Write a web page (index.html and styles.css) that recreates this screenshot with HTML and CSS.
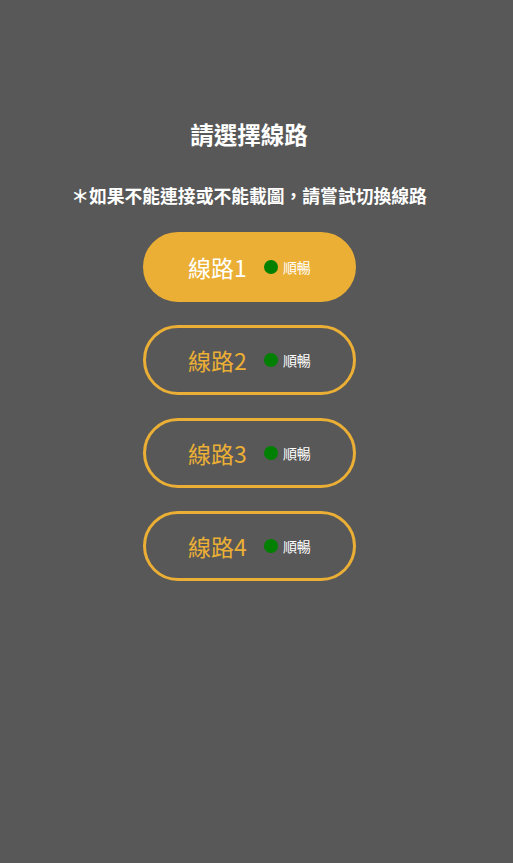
FILE: index.html
```html
<!DOCTYPE html>
<html lang="zh-Hant">
<head>
<meta charset="utf-8">
<link rel="stylesheet" href="styles.css">
</head>
<body>
<main class="page">
  <h1 class="title">請選擇線路</h1>
  <p class="hint">＊如果不能連接或不能載圖，請嘗試切換線路</p>
  <ul class="lines">
    <li class="line active"><span class="name">線路1</span><span class="dot"></span><span class="status">順暢</span></li>
    <li class="line"><span class="name">線路2</span><span class="dot"></span><span class="status">順暢</span></li>
    <li class="line"><span class="name">線路3</span><span class="dot"></span><span class="status">順暢</span></li>
    <li class="line"><span class="name">線路4</span><span class="dot"></span><span class="status">順暢</span></li>
  </ul>
</main>
</body>
</html>
```
FILE: styles.css
```css
html, body {
  margin: 0;
  padding: 0;
  background: #585858;
  height: 100%;
}
body {
  font-family: "Noto Sans CJK TC", "Noto Sans", sans-serif;
  color: #ffffff;
}
.page {
  width: 498px;
  display: flex;
  flex-direction: column;
  align-items: center;
  padding-top: 117px;
}
.title {
  margin: 0;
  font-size: 23.5px;
  line-height: 34px;
  font-weight: 700;
}
.hint {
  margin: 31px 0 0;
  font-size: 17.8px;
  line-height: 26px;
  font-weight: 700;
}
.lines {
  list-style: none;
  margin: 24px 0 0;
  padding: 0;
  display: flex;
  flex-direction: column;
  gap: 23px;
}
.line {
  box-sizing: border-box;
  width: 213px;
  height: 70px;
  border: 3.5px solid #ebaf35;
  border-radius: 35px;
  display: flex;
  align-items: center;
  justify-content: center;
  color: #ebaf35;
}
.line.active {
  background: #ebaf35;
  color: #ffffff;
}
.name {
  font-size: 23px;
  font-weight: 400;
  margin-left: 1px;
}
.dot {
  width: 14px;
  height: 14px;
  border-radius: 50%;
  background: #008000;
  margin-left: 17px;
}
.status {
  font-size: 14px;
  font-weight: 400;
  color: #ffffff;
  margin-left: 5px;
}
```
